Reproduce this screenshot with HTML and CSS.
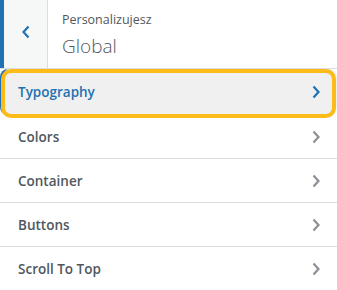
FILE: index.html
```html
<!DOCTYPE html>
<html>
<head>
<meta charset="utf-8">
<link rel="stylesheet" href="styles.css">
</head>
<body>
<div class="panel">
  <div class="header">
    <div class="back">
      <svg width="10" height="14" viewBox="0 0 10 14"><path d="M7.5 1.5 L2.5 7 L7.5 12.5" fill="none" stroke="#2271b1" stroke-width="2.2"/></svg>
    </div>
    <div class="titles">
      <div class="sub">Personalizujesz</div>
      <div class="title">Global</div>
    </div>
  </div>
  <div class="row active"><span>Typography</span><svg class="chev" width="10" height="14" viewBox="0 0 10 14"><path d="M2.5 1.5 L7.5 7 L2.5 12.5" fill="none" stroke="currentColor" stroke-width="2.2"/></svg></div>
  <div class="row"><span>Colors</span><svg class="chev" width="10" height="14" viewBox="0 0 10 14"><path d="M2.5 1.5 L7.5 7 L2.5 12.5" fill="none" stroke="currentColor" stroke-width="2.2"/></svg></div>
  <div class="row"><span>Container</span><svg class="chev" width="10" height="14" viewBox="0 0 10 14"><path d="M2.5 1.5 L7.5 7 L2.5 12.5" fill="none" stroke="currentColor" stroke-width="2.2"/></svg></div>
  <div class="row"><span>Buttons</span><svg class="chev" width="10" height="14" viewBox="0 0 10 14"><path d="M2.5 1.5 L7.5 7 L2.5 12.5" fill="none" stroke="currentColor" stroke-width="2.2"/></svg></div>
  <div class="row"><span>Scroll To Top</span><svg class="chev" width="10" height="14" viewBox="0 0 10 14"><path d="M2.5 1.5 L7.5 7 L2.5 12.5" fill="none" stroke="currentColor" stroke-width="2.2"/></svg></div>
</div>
</body>
</html>
```
FILE: styles.css
```css
html, body { margin: 0; padding: 0; background: #fff; }
body { font-family: "Open Sans", "Noto Sans", sans-serif; color: #50575e; }
.panel { width: 337px; }
.header { display: flex; height: 68px; border-bottom: 1px solid #dcdcde; }
.back { width: 43px; border-left: 4px solid #2271b1; background: #f6f7f7; border-right: 1px solid #dcdcde; display: flex; align-items: center; justify-content: center; padding-bottom: 4px; }
.titles { padding: 12px 0 0 14px; }
.sub { font-size: 12.5px; line-height: 16px; color: #50575e; }
.title { font-size: 19px; font-weight: 300; line-height: 24px; margin-top: 6px; color: #50575e; }
.row { display: flex; align-items: center; justify-content: space-between; height: 43px; padding: 0 16px 0 18px; border-bottom: 1px solid #dcdcde; font-size: 13.5px; font-weight: 600; color: #50575e; }
.row .chev { color: #8c8f94; }
.row.active { position: relative; height: 46px; color: #2271b1; background: #f0f0f1; border-left: 4px solid #2271b1; padding-left: 14px; border-bottom: none; border-radius: 8px; }
.row.active::after { content: ""; position: absolute; top: 0; bottom: -3px; left: -3px; right: 1px; border: 4px solid #fbbc1a; border-radius: 10px; pointer-events: none; }
.row.active .chev { color: #2271b1; }
```
